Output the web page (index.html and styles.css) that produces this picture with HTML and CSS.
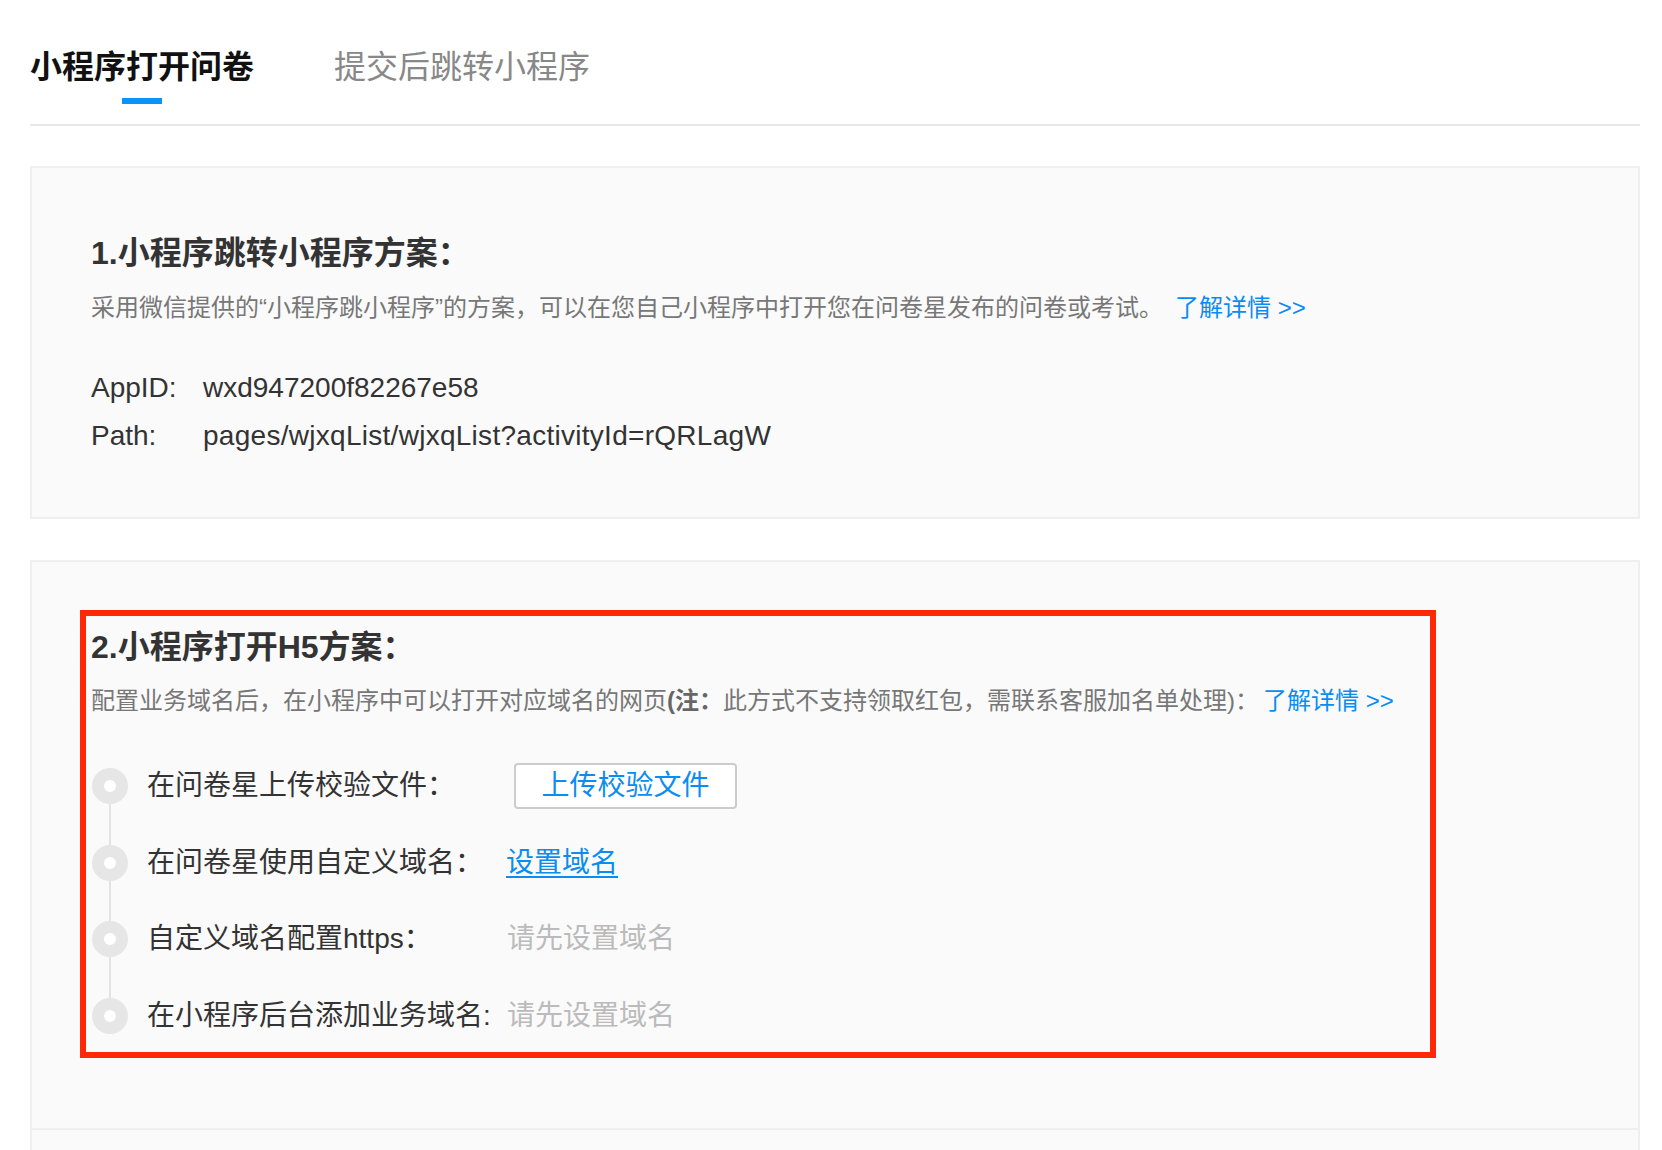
FILE: index.html
```html
<!DOCTYPE html>
<html lang="zh-CN">
<head>
<meta charset="utf-8">
<title>小程序打开问卷</title>
<link rel="stylesheet" href="styles.css">
</head>
<body>
<div class="page">
  <div class="tabs">
    <div class="tab active">
      <span class="tab-text">小程序打开问卷</span>
      <span class="tab-bar"></span>
    </div>
    <div class="tab">
      <span class="tab-text">提交后跳转小程序</span>
    </div>
  </div>

  <section class="card card-one">
    <h2 class="card-title">1.小程序跳转小程序方案：</h2>
    <p class="card-desc">采用微信提供的“小程序跳小程序”的方案，可以在您自己小程序中打开您在问卷星发布的问卷或考试。<a class="more more-one" href="#">了解详情 &gt;&gt;</a></p>
    <div class="info">
      <span class="info-label">AppID:</span><span class="info-value">wxd947200f82267e58</span>
      <span class="info-label">Path:</span><span class="info-value path-value">pages/wjxqList/wjxqList?activityId=rQRLagW</span>
    </div>
  </section>

  <section class="card card-two">
    <h2 class="card-title">2.小程序打开H5方案：</h2>
    <p class="card-desc">配置业务域名后，在小程序中可以打开对应域名的网页<b class="note">(注：</b>此方式不支持领取红包，需联系客服加名单处理)：<a class="more more-two" href="#">了解详情 &gt;&gt;</a></p>
    <ul class="steps">
      <li class="step">
        <span class="marker"><i class="seg seg-top hidden"></i><i class="dot"></i><i class="seg"></i></span>
        <span class="step-label">在问卷星上传校验文件：</span>
        <button class="upload-btn" type="button">上传校验文件</button>
      </li>
      <li class="step">
        <span class="marker"><i class="seg"></i><i class="dot"></i><i class="seg"></i></span>
        <span class="step-label">在问卷星使用自定义域名：</span>
        <a class="set-domain" href="#">设置域名</a>
      </li>
      <li class="step">
        <span class="marker"><i class="seg"></i><i class="dot"></i><i class="seg"></i></span>
        <span class="step-label">自定义域名配置https：</span>
        <span class="placeholder">请先设置域名</span>
      </li>
      <li class="step">
        <span class="marker"><i class="seg"></i><i class="dot"></i><i class="seg hidden"></i></span>
        <span class="step-label">在小程序后台添加业务域名:</span>
        <span class="placeholder">请先设置域名</span>
      </li>
    </ul>
    <div class="highlight"></div>
  </section>

  <section class="card card-three"></section>
</div>
</body>
</html>
```

FILE: styles.css
```css
html, body {
  margin: 0;
  padding: 0;
  background: #ffffff;
}

body {
  font-family: "Liberation Sans", "Noto Sans CJK SC", sans-serif;
  color: #333333;
  height: 1150px;
  overflow: hidden;
}

.page {
  width: 1610px;
  margin-left: 30px;
}

/* Tabs */
.tabs {
  display: flex;
  gap: 80px;
  padding-top: 45px;
  padding-bottom: 20px;
  border-bottom: 2px solid #e8e8e8;
}

.tab {
  display: flex;
  flex-direction: column;
  align-items: center;
  font-size: 32px;
  line-height: 44px;
  color: #888888;
  height: 59px;
}

.tab.active {
  color: #111111;
  font-weight: 700;
}

.tab-bar {
  display: block;
  width: 40px;
  height: 6px;
  margin-top: 9px;
  background: #0a93fa;
}

/* Cards */
.card {
  box-sizing: border-box;
  width: 1610px;
  background: #fafafa;
  border: 2px solid #efefef;
  padding-left: 59px;
}

.card-one {
  margin-top: 40px;
  padding-top: 63px;
  padding-bottom: 57px;
}

.card-two {
  position: relative;
  margin-top: 41px;
  padding-top: 63px;
  padding-bottom: 74px;
}

.card-three {
  height: 40px;
  border-top: 0;
  border-bottom: 0;
}

.card-title {
  margin: 0;
  font-size: 32px;
  line-height: 44px;
  font-weight: 700;
  color: #333333;
}

.card-desc {
  margin: 15px 0 0;
  font-size: 24px;
  line-height: 36px;
  color: #777777;
}

.card-two .card-desc {
  margin-top: 14px;
}

.note {
  font-weight: 700;
  color: #666666;
}

.more {
  color: #0a8cf0;
  text-decoration: none;
}

.more-one {
  margin-left: 12px;
}

.more-two {
  margin-left: 4px;
}

/* AppID / Path */
.info {
  display: grid;
  grid-template-columns: 112px auto;
  margin-top: 38px;
  font-size: 28px;
  line-height: 48px;
  color: #333333;
}

.path-value {
  letter-spacing: 0.28px;
}

/* Steps */
.steps {
  list-style: none;
  margin: 29px 0 0;
  padding: 0;
}

.step {
  display: flex;
  align-items: center;
  height: 76.5px;
  font-size: 28px;
  line-height: 40px;
}

.marker {
  display: flex;
  flex-direction: column;
  align-items: center;
  align-self: stretch;
  width: 36px;
  margin-left: 1px;
}

.seg {
  flex: 1;
  width: 2px;
  background: #e3e3e3;
}

.seg.hidden {
  visibility: hidden;
}

.dot {
  box-sizing: border-box;
  width: 36px;
  height: 36px;
  border-radius: 50%;
  border: 12px solid #e6e6e6;
  background: #ffffff;
  flex: none;
}

.step-label {
  width: 359px;
  margin-left: 19px;
  color: #333333;
}

.upload-btn {
  box-sizing: border-box;
  width: 223px;
  height: 46px;
  margin-left: 8px;
  padding: 0;
  border: 2px solid #cccccc;
  border-radius: 4px;
  background: #ffffff;
  color: #0a8cf0;
  font-family: "Liberation Sans", "Noto Sans CJK SC", sans-serif;
  font-size: 28px;
  line-height: 40px;
  text-align: center;
}

.set-domain {
  color: #0a8cf0;
  text-decoration: underline;
  text-underline-offset: 4px;
  text-decoration-thickness: 2px;
}

.placeholder {
  color: #bbbbbb;
  margin-left: 1px;
}

/* Red annotation frame over the H5 section */
.highlight {
  position: absolute;
  left: 48px;
  top: 48px;
  width: 1356px;
  height: 448px;
  box-sizing: border-box;
  border: 6px solid #ff2a05;
  pointer-events: none;
}
```
